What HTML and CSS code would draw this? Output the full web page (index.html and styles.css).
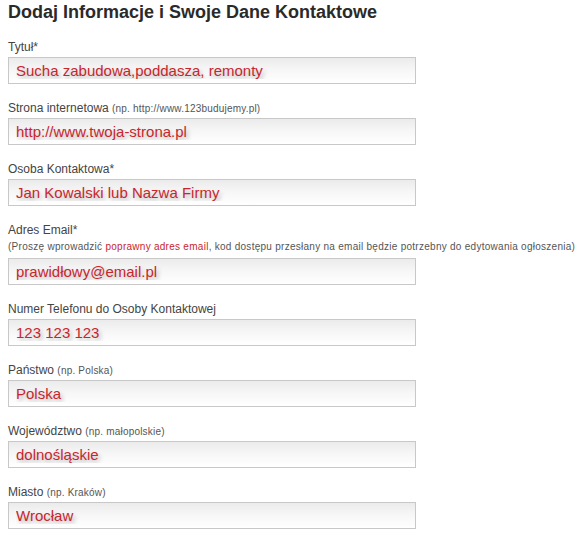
FILE: index.html
```html
<!DOCTYPE html>
<html lang="pl">
<head>
<meta charset="utf-8">
<link rel="stylesheet" href="styles.css">
</head>
<body>
<div class="form">
  <h1 class="title">Dodaj Informacje i Swoje Dane Kontaktowe</h1>

  <div class="field">
    <div class="label">Tytuł*</div>
    <input class="inp" type="text" value="Sucha zabudowa,poddasza, remonty">
  </div>

  <div class="field">
    <div class="label">Strona internetowa <span class="small">(np. http://www.123budujemy.pl)</span></div>
    <input class="inp" type="text" value="http://www.twoja-strona.pl">
  </div>

  <div class="field">
    <div class="label">Osoba Kontaktowa*</div>
    <input class="inp" type="text" value="Jan Kowalski lub Nazwa Firmy">
  </div>

  <div class="field">
    <div class="label">Adres Email*</div>
    <div class="hint">(Proszę wprowadzić <span class="red">poprawny adres email</span>, kod dostępu przesłany na email będzie potrzebny do edytowania ogłoszenia)</div>
    <input class="inp" type="text" value="prawidłowy@email.pl">
  </div>

  <div class="field">
    <div class="label">Numer Telefonu do Osoby Kontaktowej</div>
    <input class="inp" type="text" value="123 123 123">
  </div>

  <div class="field">
    <div class="label">Państwo <span class="small">(np. Polska)</span></div>
    <input class="inp" type="text" value="Polska">
  </div>

  <div class="field">
    <div class="label">Województwo <span class="small">(np. małopolskie)</span></div>
    <input class="inp" type="text" value="dolnośląskie">
  </div>

  <div class="field">
    <div class="label">Miasto <span class="small">(np. Kraków)</span></div>
    <input class="inp" type="text" value="Wrocław">
  </div>
</div>
</body>
</html>
```

FILE: styles.css
```css
html, body {
  margin: 0;
  padding: 0;
  background: #fff;
}
body {
  font-family: "Liberation Sans", Arial, sans-serif;
  color: #444;
}
.form {
  padding: 2px 8px 0 8px;
  display: flex;
  flex-direction: column;
}
.title {
  margin: 0 0 17px 0;
  font-size: 18px;
  line-height: 21px;
  font-weight: bold;
  color: #2a2a2a;
}
.field {
  display: flex;
  flex-direction: column;
  margin-bottom: 17px;
}
.label {
  font-size: 12px;
  line-height: 15px;
  margin-bottom: 2px;
  color: #444;
}
.small {
  font-size: 10px;
  letter-spacing: 0.2px;
  color: #555;
}
.hint {
  font-size: 10px;
  letter-spacing: 0.27px;
  line-height: 18px;
  margin-top: -2px;
  margin-bottom: 2px;
  color: #555;
  white-space: nowrap;
}
.red {
  color: #c8262d;
}
.inp {
  box-sizing: border-box;
  width: 408px;
  height: 27px;
  margin: 0;
  padding: 0 7px;
  border: 1px solid #c8c8c8;
  background: linear-gradient(to bottom, #ebebeb 0%, #f6f6f6 45%, #ffffff 100%);
  font-family: "Liberation Sans", Arial, sans-serif;
  font-size: 15px;
  color: #c8262d;
  text-shadow: 2px 3px 4px rgba(0, 0, 0, 0.28);
  outline: none;
}
```
